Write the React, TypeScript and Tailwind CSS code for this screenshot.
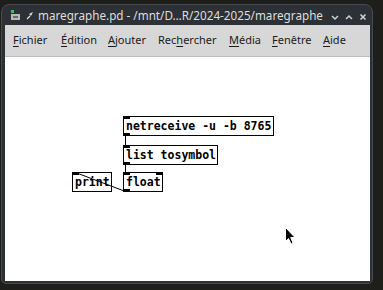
import React from "react";

const mono = { fontFamily: '"DejaVu Sans Mono", monospace' };

function PdBox({
  left,
  top,
  width,
  text,
  inlets,
  outlet = true,
}: {
  left: number;
  top: number;
  width: number;
  text: string;
  inlets: ("l" | "r")[];
  outlet?: boolean;
}) {
  return (
    <div
      className="absolute h-[20px] border border-black bg-white"
      style={{ left, top, width }}
    >
      {inlets.includes("l") && <div className="absolute left-[-1px] top-[-1px] w-[7px] h-[3px] bg-black" />}
      {inlets.includes("r") && <div className="absolute right-[-1px] top-[-1px] w-[7px] h-[3px] bg-black" />}
      {outlet && <div className="absolute left-[-1px] bottom-[-1px] w-[7px] h-[3px] bg-black" />}
      <div
        className="pl-[2px] text-[11.5px] leading-[18px] font-bold text-black whitespace-nowrap"
        style={mono}
      >
        {text}
      </div>
    </div>
  );
}

function MenuItem({ w, pre, u, post }: { w: number; pre?: string; u: string; post: string }) {
  return (
    <span className="whitespace-nowrap shrink-0" style={{ width: w }}>
      {pre}
      <span className="underline underline-offset-[2px] decoration-1">{u}</span>
      {post}
    </span>
  );
}

export default function App() {
  return (
    <div className="w-[383px] h-[290px] bg-[#1e1f1b] pt-[4px] pl-[1px] overflow-hidden">
      <div className="w-[372px] h-[280px] border border-[#464a51] rounded-t-[8px] rounded-b-[5px] bg-[#2d3035] flex flex-col">
        {/* title bar */}
        <div className="h-[20px] flex items-center relative">
          <svg width="40" height="20" viewBox="0 0 40 20" className="shrink-0">
            <rect x="9" y="9" width="9" height="6" fill="#b8b8b8" />
            <rect x="11" y="11" width="5" height="2" fill="#6a6a6a" />
            <rect x="9" y="5" width="3" height="3" fill="#2ecc40" />
            <path d="M25 14 L28 11" stroke="#e0e0e0" strokeWidth="1.2" />
            <path d="M27 9 L31 7 L29 11 Z" fill="#e0e0e0" />
          </svg>
          <span
            className="text-[11.7px] text-[#dedede] whitespace-nowrap ml-[-4px] leading-[20px]"
            style={{ fontFamily: '"Noto Sans", sans-serif' }}
          >
            maregraphe.pd - /mnt/D…R/2024-2025/maregraphe
          </span>
          <div className="flex-1" />
          <svg width="45" height="20" viewBox="0 0 45 20" className="shrink-0 mr-[4px]">
            <path d="M9 11 L12 14 L15 11" stroke="#d0d0d0" strokeWidth="1.5" fill="none" />
            <path d="M23 14 L26 11 L29 14" stroke="#d0d0d0" strokeWidth="1.5" fill="none" />
            <path d="M37.5 9.5 L42.5 14.5 M42.5 9.5 L37.5 14.5" stroke="#d0d0d0" strokeWidth="1.6" />
          </svg>
        </div>
        {/* content */}
        <div className="ml-[3px] mr-[2px] w-[365px] flex flex-col">
          <div
            className="h-[31px] bg-[#d7d7d7] flex items-center pl-[8px] pb-[1px] text-[11px] text-[#1a1a1a]"
            style={{ fontFamily: '"Noto Sans", sans-serif' }}
          >
            <MenuItem w={48} u="F" post="ichier" />
            <MenuItem w={47} u="É" post="dition" />
            <MenuItem w={50} u="A" post="jouter" />
            <MenuItem w={71} pre="Rec" u="h" post="ercher" />
            <MenuItem w={43} u="M" post="édia" />
            <MenuItem w={51} u="F" post="enêtre" />
            <MenuItem w={40} u="A" post="ide" />
          </div>
          <div className="h-[1px] bg-[#bcbcbc]" />
          <div className="h-[224px] bg-white relative">
            <svg className="absolute inset-0" width="365" height="224">
              <line x1="120.5" y1="78" x2="120.5" y2="88" stroke="black" strokeWidth="1" />
              <line x1="120.5" y1="107" x2="120.5" y2="115" stroke="black" strokeWidth="1" />
            </svg>
            <PdBox left={118} top={59} width={151} text="netreceive -u -b 8765" inlets={["l"]} />
            <PdBox left={118} top={88} width={95} text="list tosymbol" inlets={["l"]} />
            <PdBox left={118} top={115} width={40} text="float" inlets={["l", "r"]} />
            <PdBox left={67} top={115} width={40} text="print" inlets={["l"]} outlet={false} />
            <svg className="absolute inset-0 pointer-events-none" width="365" height="224">
              <line x1="70.5" y1="115.5" x2="120.5" y2="134.5" stroke="black" strokeWidth="1" />
              <path
                d="M280.5 170.5 L280.5 184.5 L283.5 181.5 L286 187 L288 186 L285.7 180.5 L290 180.5 Z"
                fill="black"
                stroke="white"
                strokeWidth="1"
              />
            </svg>
          </div>
        </div>
      </div>
    </div>
  );
}
